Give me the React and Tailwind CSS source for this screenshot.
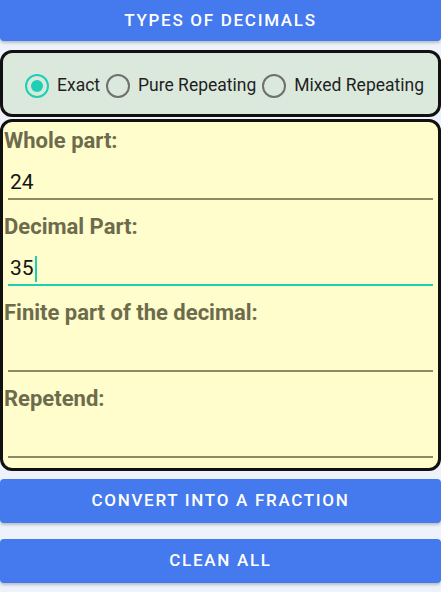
import React from "react";

function Radio({ checked, label }) {
  return (
    <div className="flex items-center">
      <span
        className={`flex h-[24px] w-[24px] items-center justify-center rounded-full border-[2.5px] ${
          checked ? "border-[#1dcfb5]" : "border-[#6f6f6f]"
        }`}
      >
        {checked && <span className="h-[12px] w-[12px] rounded-full bg-[#1dcfb5]" />}
      </span>
      <span className="ml-[8px] text-[17.5px] leading-none text-[#1f1f1f]">{label}</span>
    </div>
  );
}

function Field({ label, value, focused, first }) {
  return (
    <div className={first ? "mt-[4px]" : "mt-[12px]"}>
      <div className="flex h-[30px] items-center pl-[1px] text-[22px] font-bold leading-none text-[#6d6b4c]">
        {label}
      </div>
      <div
        className={`mx-[5px] flex h-[44px] items-end pb-[4px] pl-[2px] ${
          focused ? "border-b-2 border-[#1dcfb5]" : "border-b-2 border-[#8d8b66]"
        }`}
      >
        <span className="text-[21px] leading-[24px] text-[#141414]">{value}</span>
        {focused && <span className="mb-[-2px] ml-[1px] h-[26px] w-[2px] bg-[#1dcfb5]" />}
      </div>
    </div>
  );
}

function BlueButton({ children }) {
  return (
    <button className="flex h-[44px] w-full items-center justify-center rounded-[4px] bg-[#4579ee] text-[17px] font-medium tracking-[1.7px] text-white shadow-[0_2px_3px_rgba(0,0,0,0.22)]">
      {children}
    </button>
  );
}

export default function App() {
  return (
    <div
      className="flex min-h-[592px] w-full flex-col bg-[#eef3fb]"
      style={{ fontFamily: "Roboto, 'Noto Sans', sans-serif" }}
    >
      <button className="flex h-[41px] w-full items-center justify-center rounded-b-[4px] bg-[#4579ee] pt-[1px] text-[17px] font-medium tracking-[1.7px] text-white shadow-[0_2px_3px_rgba(0,0,0,0.22)]">
        TYPES OF DECIMALS
      </button>

      <div className="mt-[9px] flex h-[67px] items-center gap-[6px] rounded-[12px] border-[3px] border-[#111] bg-[#dbe9dd] pl-[22px] pt-[4px]">
        <Radio checked label="Exact" />
        <Radio label="Pure Repeating" />
        <Radio label="Mixed Repeating" />
      </div>

      <div className="mt-[2px] flex h-[352px] flex-col rounded-[12px] border-[3px] border-[#111] bg-[#fefdcb]">
        <Field first label="Whole part:" value="24" />
        <Field label="Decimal Part:" value="35" focused />
        <Field label="Finite part of the decimal:" value="" />
        <Field label="Repetend:" value="" />
      </div>

      <div className="mt-[8px]">
        <BlueButton>CONVERT INTO A FRACTION</BlueButton>
      </div>
      <div className="mt-[16px]">
        <BlueButton>CLEAN ALL</BlueButton>
      </div>
    </div>
  );
}
